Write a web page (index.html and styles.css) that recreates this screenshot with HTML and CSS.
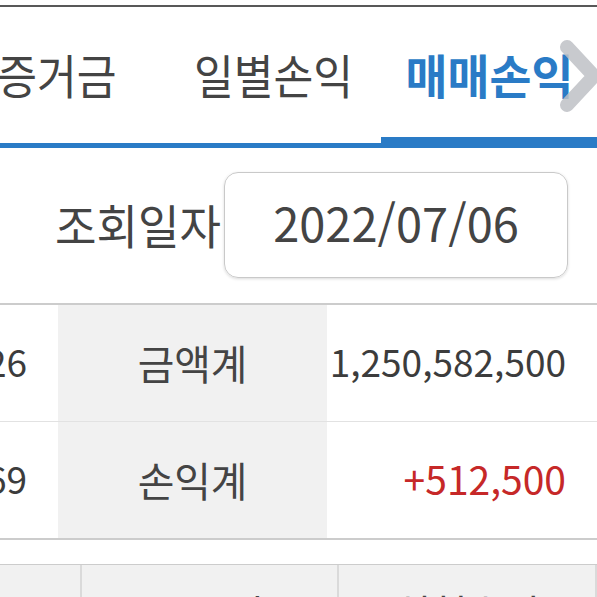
FILE: index.html
```html
<!DOCTYPE html>
<html lang="ko">
<head>
    <meta charset="UTF-8">
    <title>매매손익</title>
    <meta name="viewport" content="width=device-width, initial-scale=1.0">
    <link rel="stylesheet" href="styles.css">
</head>
<body>
<div class="status"></div>

<!-- 탭 메뉴 (가로 스크롤 상태) -->
<nav class="tabs">
    <div class="tab-list">
        <a class="tab"><span class="ko">증거금</span></a>
        <a class="tab"><span class="ko">일별손익</span></a>
        <a class="tab active"><span class="ko">매매손익</span></a>
    </div>
    <span class="tab-next">
        <svg width="44" height="74" viewBox="0 0 44 74">
            <polyline points="10,8 37,37 10,66" fill="none" stroke="#bfc1c6" stroke-width="14" stroke-linecap="round" stroke-linejoin="round"/>
        </svg>
    </span>
</nav>

<div class="query">
    <span class="query-label ko">조회일자</span>
    <div class="date-box"><span class="date">2022/07/06</span></div>
</div>

<!-- 합계 -->
<div class="summary">
    <div class="summary-row">
        <div class="cell value">3,126</div>
        <div class="cell head"><span class="ko">금액계</span></div>
        <div class="cell value">1,250,582,500</div>
    </div>
    <div class="summary-row">
        <div class="cell value">3,069</div>
        <div class="cell head"><span class="ko">손익계</span></div>
        <div class="cell value plus">+512,500</div>
    </div>
</div>

<!-- 매매내역 -->
<div class="list">
    <div class="list-head">
        <div class="col"><span class="ko">구분</span></div>
        <div class="col"><span class="ko">종목명</span></div>
        <div class="col"><span class="ko">실현손익</span></div>
    </div>
</div>
</body>
</html>
```

FILE: styles.css
```css
* {
    box-sizing: border-box;
}

html, body {
    margin: 0;
}

body {
    width: 597px;
    height: 597px;
    overflow: hidden;
    background-color: #fff;
    font-family: "Noto Sans CJK KR", "Noto Sans", sans-serif;
    color: #444;
}

.ko {
    display: inline-block;
    transform: scaleX(0.96);
}

.status {
    height: 7px;
    border-bottom: 2px solid #585858;
}

.tabs {
    position: relative;
    height: 141px;
    border-bottom: 5px solid #2a7bc6;
    overflow: hidden;
}

.tab-list {
    display: flex;
    height: 100%;
    margin-left: -51px;
}

.tab {
    flex: 0 0 216px;
    display: flex;
    align-items: center;
    justify-content: center;
    padding-bottom: 3px;
    font-size: 47px;
    line-height: 1;
    color: #444;
}

.tab .ko {
    transform: scaleX(0.92);
}

.tab.active {
    color: #2a7bc6;
    font-weight: bold;
    box-shadow: inset 0 -6px 0 #2a7bc6;
}

.tab.active .ko {
    transform: scaleX(0.97);
}

.tab-next {
    position: absolute;
    top: 32px;
    right: -4px;
    opacity: 0.85;
}

.tab-next svg {
    display: block;
}

.query {
    display: flex;
    justify-content: flex-end;
    align-items: center;
    padding: 24px 29px 25px 0;
}

.query-label {
    font-size: 47px;
    line-height: 1;
    margin: 0 3px 4px 0;
    transform-origin: right center;
}

.date-box {
    width: 344px;
    height: 106px;
    display: flex;
    align-items: center;
    justify-content: center;
    padding-bottom: 8px;
    border: 1px solid #c9c9c9;
    border-radius: 14px;
    box-shadow: 0 1px 3px rgba(0, 0, 0, 0.15);
    font-size: 47px;
    line-height: 1;
    color: #444;
}

.summary {
    border-top: 2px solid #ccc;
    border-bottom: 2px solid #ccc;
}

.summary-row {
    display: grid;
    grid-template-columns: 58px 269px 270px;
    height: 116px;
}

.summary-row + .summary-row {
    height: 117px;
    border-top: 1px solid #e2e2e2;
}

.cell {
    display: flex;
    align-items: center;
    overflow: hidden;
    white-space: nowrap;
}

.cell.head {
    justify-content: center;
    padding-bottom: 2px;
    background-color: #f1f1f1;
    font-size: 41px;
    color: #444;
}

.cell.head .ko {
    transform: scaleX(0.97);
}

.cell.value {
    justify-content: flex-end;
    padding: 0 31px 4px 0;
    font-size: 37px;
    color: #3c3c3c;
}

.cell.plus {
    font-size: 39px;
    color: #c62828;
}

.list {
    margin-top: 24px;
    border-top: 1px solid #ccc;
}

.list-head {
    display: grid;
    grid-template-columns: 82px 257px 258px;
    height: 80px;
    background-color: #f1f1f1;
}

.col {
    display: flex;
    justify-content: center;
    padding-top: 27px;
    border-right: 2px solid #dadada;
    font-size: 41px;
    line-height: 1;
    color: #444;
}

.col:first-child {
    justify-content: flex-end;
    padding-right: 10px;
}
```
